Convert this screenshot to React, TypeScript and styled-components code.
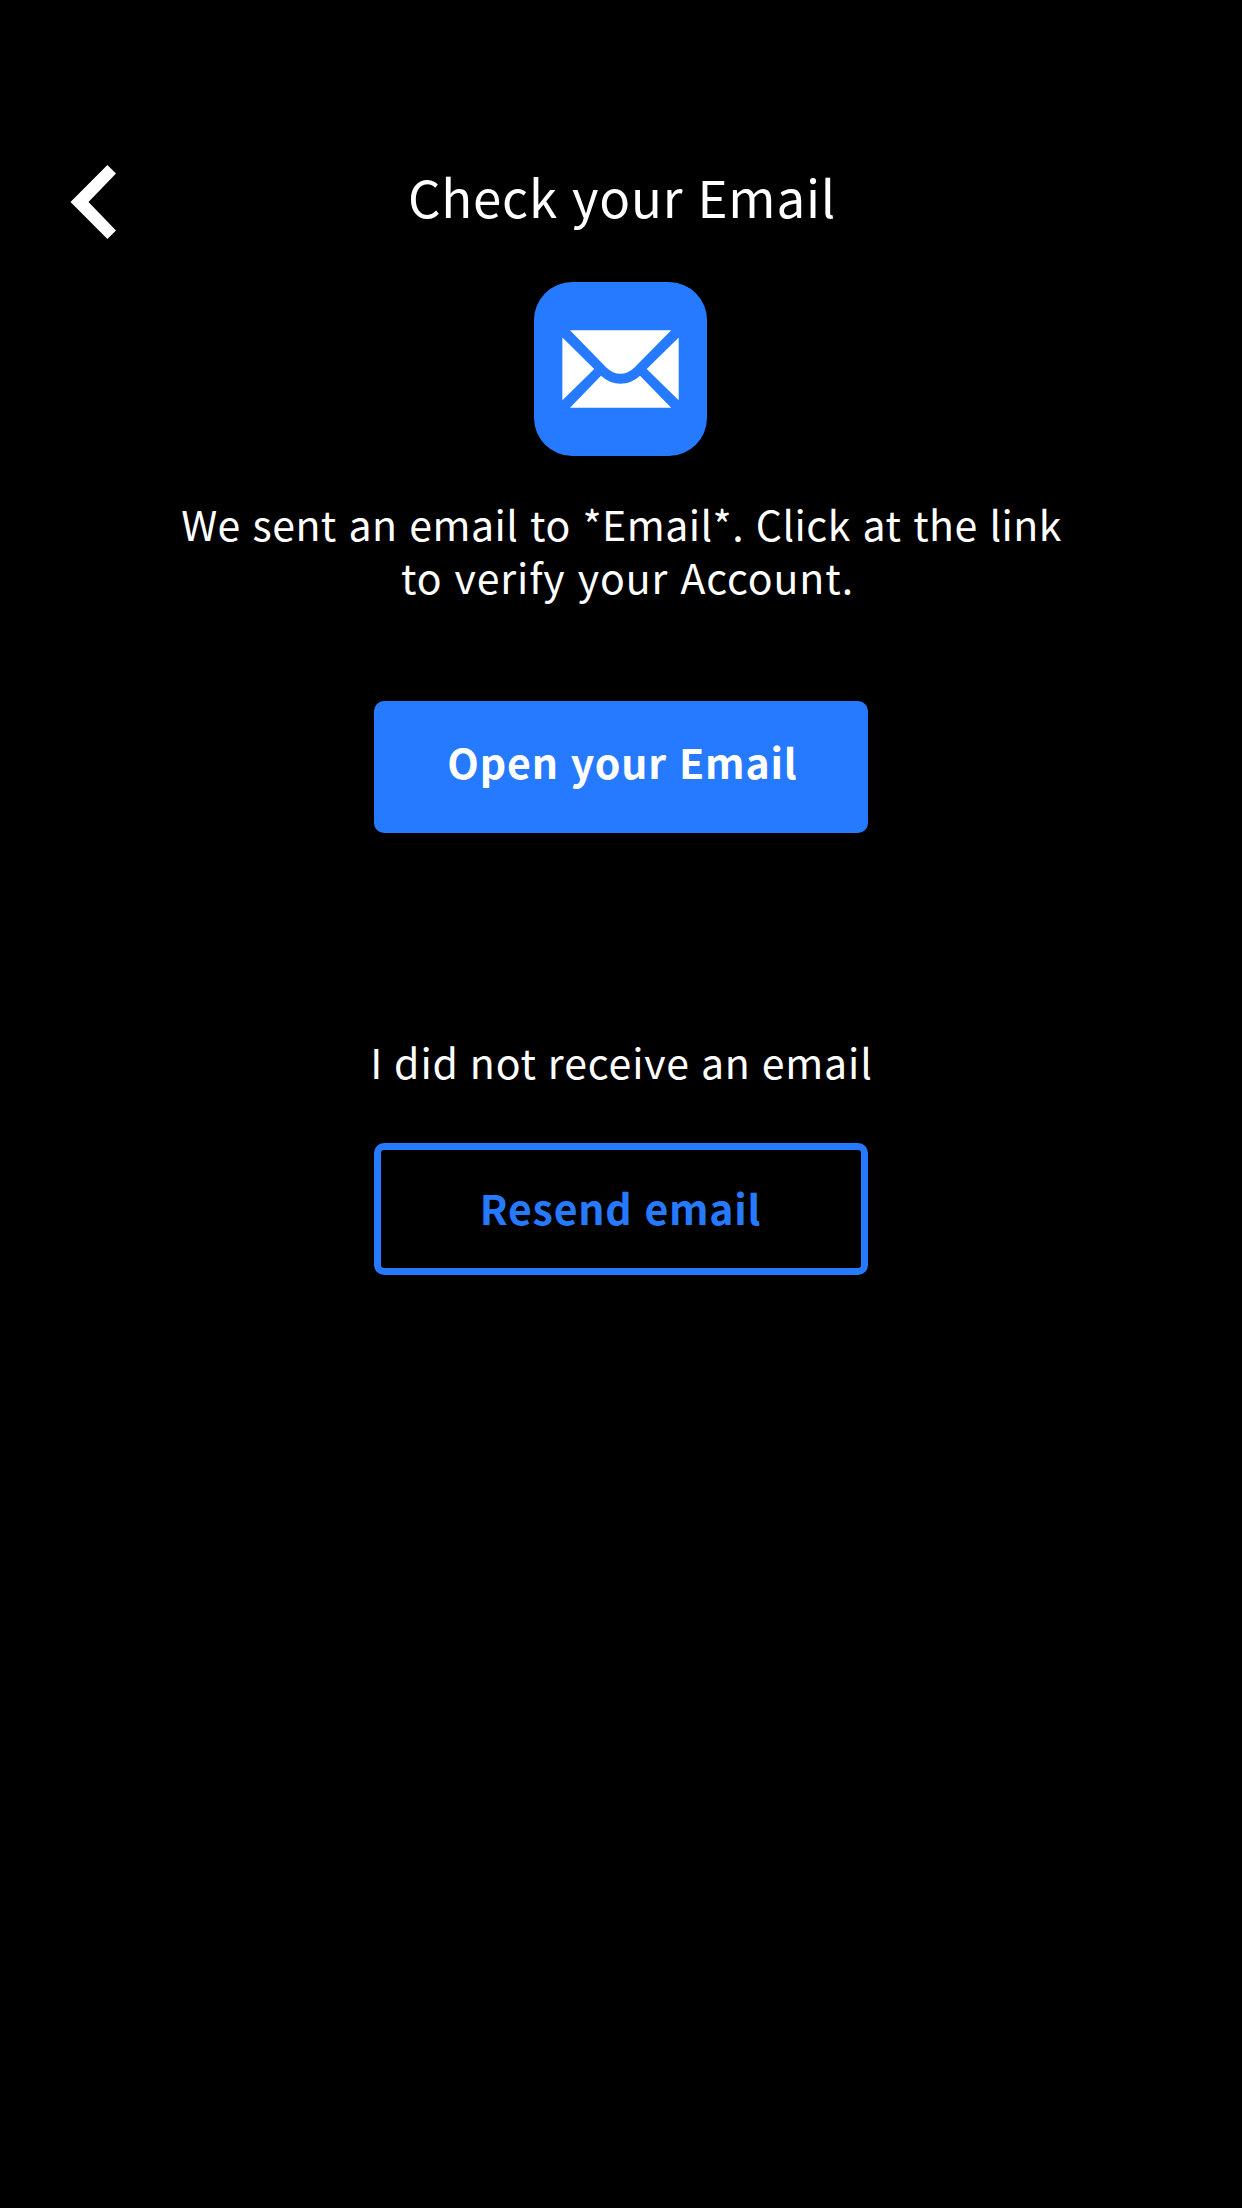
import React from 'react';
import styled, { createGlobalStyle } from 'styled-components';

const BLUE = '#267aff';

const GlobalStyle = createGlobalStyle`
  *, *::before, *::after { box-sizing: border-box; }
  body { margin: 0; background: #000; }
`;

const Screen = styled.main`
  display: flex;
  flex-direction: column;
  align-items: center;
  width: 1242px;
  height: 2208px;
  padding-top: 157px;
  background: #000;
  color: #fff;
  font-family: 'Noto Sans CJK SC', 'Noto Sans', sans-serif;
  font-size: 41px;
  line-height: 53px;
`;

const Header = styled.header`
  display: grid;
  grid-template-columns: 200px 1fr 200px;
  width: 100%;
  height: 125px;
`;

const BackButton = styled.button`
  display: block;
  width: 46px;
  height: 76px;
  margin: 7px 0 0 70px;
  padding: 0;
  border: 0;
  background: none;
  color: #fff;

  svg { display: block; }
`;

const Title = styled.h1`
  margin: 0;
  padding: 1px 0 0 2px;
  font-size: 51px;
  font-weight: 400;
  line-height: 76px;
  letter-spacing: 0.8px;
  word-spacing: 2px;
  text-align: center;
`;

const MailBadge = styled.div`
  width: 173px;
  height: 174px;
  margin-right: 1px;
  border-radius: 38px;
  background: ${BLUE};

  svg { display: block; }
`;

const Message = styled.p`
  margin: 41px 0 0;
  text-align: center;
`;

const Line = styled.span<{ $tracking: number; $gap: number; $indent?: number }>`
  display: block;
  padding-left: ${p => p.$indent ?? 0}px;
  letter-spacing: ${p => p.$tracking}px;
  word-spacing: ${p => p.$gap}px;
  white-space: nowrap;
`;

const Button = styled.button`
  display: flex;
  align-items: center;
  justify-content: center;
  width: 494px;
  height: 132px;
  border: 7px solid ${BLUE};
  border-radius: 10px;
  font: inherit;
  font-weight: 700;
  white-space: pre;
`;

const PrimaryButton = styled(Button)`
  margin-top: 98px;
  padding: 0 0 12px 3px;
  background: ${BLUE};
  color: #fff;
  letter-spacing: 0.85px;
  word-spacing: 1.8px;
`;

const OutlineButton = styled(Button)`
  margin-top: 55px;
  padding: 0 1px 4px 0;
  background: transparent;
  color: ${BLUE};
  letter-spacing: 0.75px;
  word-spacing: 2px;
`;

const Hint = styled.p`
  margin: 202px 0 0;
  text-align: center;
`;

const ChevronLeft = () => (
  <svg width="46" height="76" viewBox="0 0 46 76" fill="currentColor">
    <path d="M37.4 1L46 9.5L18.5 38L46 66.5L37.4 75L0.5 38Z" />
  </svg>
);

const Envelope = () => (
  <svg width="173" height="174" viewBox="0 0 173 174" fill="#fff">
    <path d="M36 48.3H137.2L100.5 85.5Q94 91.8 86.4 91.8T72.3 85.5Z" />
    <path d="M28.4 55.5L60.2 87L28.4 118.3Z" />
    <path d="M144.7 55.5L112.7 87L144.7 118.3Z" />
    <path d="M36 125.7H137.2L106 93.8Q97.5 101.8 86.6 101.8T67 93.8Z" />
  </svg>
);

export default function App() {
  return (
    <>
      <GlobalStyle />
      <Screen>
        <Header>
          <BackButton aria-label="Back">
            <ChevronLeft />
          </BackButton>
          <Title>Check your Email</Title>
        </Header>
        <MailBadge>
          <Envelope />
        </MailBadge>
        <Message>
          <Line $tracking={0.47} $gap={2.1} $indent={1}>We sent an email to *Email*. Click at the link</Line>
          <Line $tracking={0.87} $gap={2.2} $indent={13}>to verify your Account.</Line>
        </Message>
        <PrimaryButton>Open your Email</PrimaryButton>
        <Hint>
          <Line $tracking={0.87} $gap={0.9} $indent={1}>I did not receive an email</Line>
        </Hint>
        <OutlineButton>Resend email</OutlineButton>
      </Screen>
    </>
  );
}
